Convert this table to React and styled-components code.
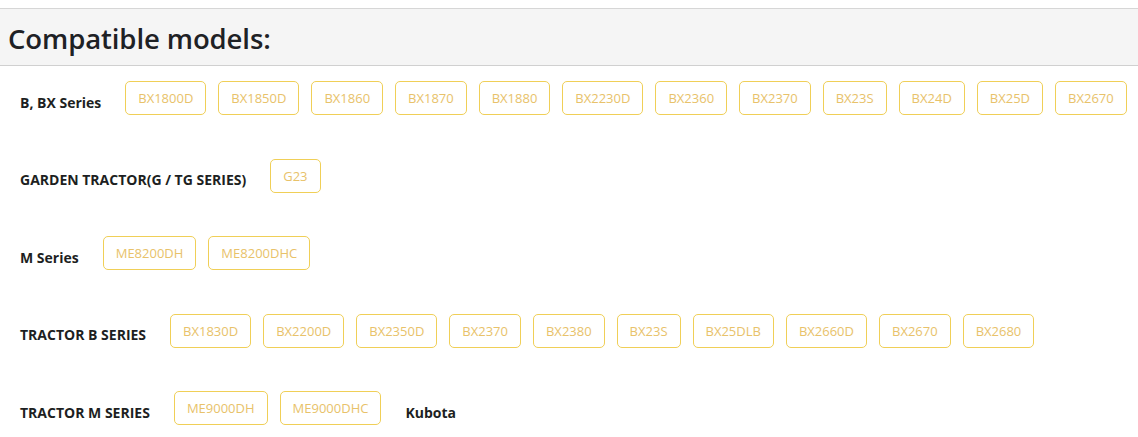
import React from "react";
import styled, { createGlobalStyle } from "styled-components";

const Global = createGlobalStyle`
  html, body { margin: 0; padding: 0; background: #fff; }
  body { font-family: "Open Sans", "Noto Sans", sans-serif; }
`;

const Page = styled.div`
  padding-top: 8px;
`;

const Header = styled.div`
  background: #f5f5f5;
  border-top: 1px solid #d6d6d6;
  border-bottom: 1px solid #d0d0d0;
  height: 56px;
  display: flex;
  align-items: center;
  padding: 0 8px;
`;

const Title = styled.h2`
  margin: 2px 0 0;
  font-size: 27.5px;
  font-weight: 600;
  color: #1e2125;
  letter-spacing: -0.1px;
`;

const List = styled.div`
  display: flex;
  flex-direction: column;
  gap: 43.5px;
  padding: 15px 8px;
`;

const Row = styled.div`
  display: flex;
  align-items: center;
  gap: 12px;
  flex-wrap: wrap;
`;

const Label = styled.span`
  padding: 8px 12px 0;
  font-size: 14px;
  font-weight: 700;
  color: #1d1f22;
  white-space: nowrap;
`;

const Model = styled.a`
  display: inline-flex;
  align-items: center;
  height: 34px;
  box-sizing: border-box;
  padding: 0 12px;
  border: 1px solid #f0cf57;
  border-radius: 5px;
  font-size: 13px;
  color: #e8c26a;
  text-decoration: none;
  white-space: nowrap;
`;

const groups = [
  {
    label: "B, BX Series",
    models: ["BX1800D", "BX1850D", "BX1860", "BX1870", "BX1880", "BX2230D", "BX2360", "BX2370", "BX23S", "BX24D", "BX25D", "BX2670"],
  },
  { label: "GARDEN TRACTOR(G / TG SERIES)", models: ["G23"] },
  { label: "M Series", models: ["ME8200DH", "ME8200DHC"] },
  {
    label: "TRACTOR B SERIES",
    models: ["BX1830D", "BX2200D", "BX2350D", "BX2370", "BX2380", "BX23S", "BX25DLB", "BX2660D", "BX2670", "BX2680"],
  },
  { label: "TRACTOR M SERIES", models: ["ME9000DH", "ME9000DHC"], brand: "Kubota" },
];

export default function App() {
  return (
    <Page>
      <Global />
      <Header>
        <Title>Compatible models:</Title>
      </Header>
      <List>
        {groups.map((g) => (
          <Row key={g.label}>
            <Label>{g.label}</Label>
            {g.models.map((m) => (
              <Model key={m} href="#">{m}</Model>
            ))}
            {g.brand && <Label>{g.brand}</Label>}
          </Row>
        ))}
      </List>
    </Page>
  );
}
